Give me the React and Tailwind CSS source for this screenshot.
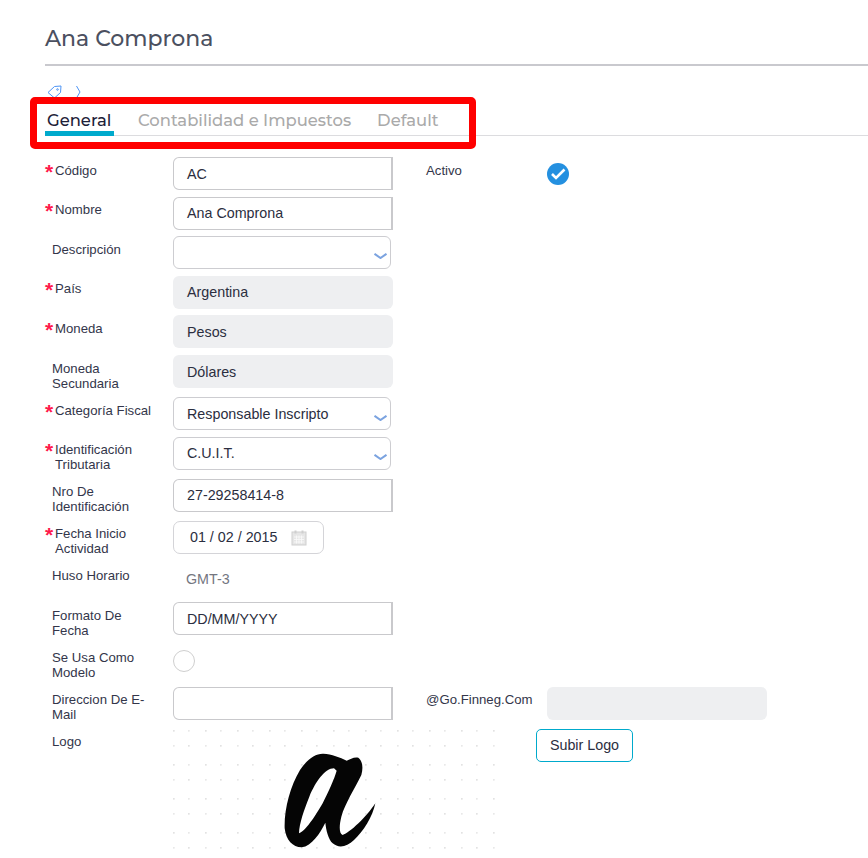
import React from "react";

const labelFont = "font-['Liberation_Sans',sans-serif]";
const inputBase = "h-[33px] flex items-center text-[14.3px] text-[#2b2e40]";
const textInput = `${inputBase} w-[220px] pl-[13px] bg-white border border-[#c9c9cc] border-r-2 rounded-l-[6px]`;
const readOnly = `${inputBase} w-[220px] pl-[14px] bg-[#eeeff1] rounded-[6px]`;

function Label({ required, tight, children }) {
    return (
        <div className={`w-[128px] shrink-0 flex ${tight ? "pt-[5px]" : "pt-[6px]"} text-[13.2px] leading-[15px] text-[#33364a]`}>
            {required ? (
                <span className="w-[10px] shrink-0 text-[#ff1a4b] text-[21px] leading-[17px] font-bold">*</span>
            ) : (
                <span className="w-[7px] shrink-0" />
            )}
            <span className="max-w-[100px]">{children}</span>
        </div>
    );
}

function Select({ value, className = "" }) {
    return (
        <div className={`${inputBase} w-[218px] pl-[13px] pr-[3px] justify-between bg-white border border-[#cdcdd1] rounded-[6px] ${className}`}>
            <span>{value}</span>
            <svg width="13" height="6" viewBox="0 0 13 6" fill="none" stroke="#7ba3e0" strokeWidth="2" className="mt-[6px]">
                <path d="M0.5 0.8 L6.5 5 L12.5 0.8" />
            </svg>
        </div>
    );
}

function TagIcon() {
    return (
        <svg width="15" height="14" viewBox="0 0 15 14" fill="none" stroke="#4f95f5" strokeWidth="1">
            <path d="M1 7.5 L7.5 1.5 L14 1 L13.5 7.5 L7.5 13 Z" />
            <circle cx="10.5" cy="4.5" r="0.8" />
        </svg>
    );
}

function CalendarIcon() {
    return (
        <svg width="16" height="16" viewBox="0 0 16 16">
            <rect x="1" y="2" width="14" height="13" fill="#e6e6e6" stroke="#cfcfcf" />
            <rect x="3.5" y="0.5" width="2" height="3" fill="#cfcfcf" />
            <rect x="10.5" y="0.5" width="2" height="3" fill="#cfcfcf" />
            <path d="M3 7h10M3 9.5h10M3 12h10M5.5 5.5v8M8 5.5v8M10.5 5.5v8" stroke="#fafafa" strokeWidth="0.8" />
        </svg>
    );
}

function LogoImage() {
    return (
        <svg width="322" height="122" viewBox="69 267 966 366">
            <defs>
                <pattern id="dots" x="69" y="267" width="96" height="102" patternUnits="userSpaceOnUse">
                    <rect x="0" y="3" width="5" height="5" fill="#e2e2e2" />
                    <rect x="45" y="3" width="5" height="5" fill="#e8e8e8" />
                    <rect x="0" y="48" width="5" height="5" fill="#e8e8e8" />
                    <rect x="45" y="48" width="5" height="5" fill="#e2e2e2" />
                </pattern>
            </defs>
            <rect x="69" y="267" width="966" height="366" fill="url(#dots)" />
            <path
                fillRule="evenodd"
                fill="#050505"
                d="M520 341 C545 342 570 352 590 362 C600 358 612 350 625 353 C638 362 640 385 634 405 C615 445 585 490 574 530 C568 555 566 580 578 585 C600 578 650 530 676 490 C668 530 640 575 612 600 C590 622 565 625 548 610 C535 598 528 570 526 548 C510 580 485 618 455 622 C428 622 408 600 404 565 C402 510 420 440 450 390 C470 360 495 340 520 341 Z M552 385 C525 385 497 425 478 470 C462 510 448 550 447 580 C465 575 495 530 518 490 C535 455 552 420 560 392 Z"
            />
        </svg>
    );
}

export default function App() {
    return (
        <div className={`relative w-[868px] h-[858px] overflow-hidden bg-white pl-[45px] ${labelFont}`}>
            {/* Header */}
            <h1 className="pt-[24px] h-[64px] text-[22px] leading-[30px] font-medium text-[#4b5060] font-['Montserrat','Inter',sans-serif]">
                Ana Comprona
            </h1>
            <div className="h-[2px] bg-[#c9c9ce]" />

            {/* Breadcrumb */}
            <div className="h-[29px] flex items-start gap-[14px] pl-[2px] pt-[19px]">
                <TagIcon />
                <svg width="5" height="14" viewBox="0 0 5 14" fill="none" stroke="#4f95f5" strokeWidth="1">
                    <path d="M0.5 1 L4 7 L0.5 13" />
                </svg>
            </div>

            {/* Tabs */}
            <div className="mt-[10px] h-[31px] flex border-b border-[#dcdcdf] text-[16.4px] leading-[24px] font-medium font-['Montserrat','Inter',sans-serif]">
                <div className="w-[69px] h-[31px] pl-[2px] pt-[3px] border-b-[5px] border-[#00aacc] text-[#1d2138] whitespace-nowrap">General</div>
                <div className="ml-[24px] pt-[3px] text-[#aaaaaa] whitespace-nowrap">Contabilidad e Impuestos</div>
                <div className="ml-[26px] pt-[3px] text-[#aaaaaa] whitespace-nowrap">Default</div>
            </div>

            {/* Form */}
            <div className="mt-[21px] flex flex-col">
                <div className="flex h-[33px]">
                    <Label required>Código</Label>
                    <div className={`${textInput} pt-[2px]`}>AC</div>
                    <div className="ml-[33px] w-[121px] pt-[6px] text-[13.2px] leading-[15px] text-[#33364a]">Activo</div>
                    <div className="mt-[6px] w-[22px] h-[22px] rounded-full bg-[#2490e0] flex items-center justify-center">
                        <svg width="16" height="14" viewBox="0 0 16 14" fill="none" stroke="#ffffff" strokeWidth="2.6">
                            <path d="M2 7 L6 11 L14.5 2.5" />
                        </svg>
                    </div>
                </div>
                <div className="flex h-[33px] mt-[7px]">
                    <Label required tight>Nombre</Label>
                    <div className={textInput}>Ana Comprona</div>
                </div>
                <div className="flex h-[33px] mt-[6px]">
                    <Label>Descripción</Label>
                    <Select value="" />
                </div>
                <div className="flex h-[33px] mt-[7px]">
                    <Label required tight>País</Label>
                    <div className={readOnly}>Argentina</div>
                </div>
                <div className="flex h-[33px] mt-[6px]">
                    <Label required>Moneda</Label>
                    <div className={`${readOnly} pt-[2px]`}>Pesos</div>
                </div>
                <div className="flex h-[33px] mt-[7px]">
                    <Label>Moneda Secundaria</Label>
                    <div className={`${readOnly} pt-[2px]`}>Dólares</div>
                </div>
                <div className="flex h-[33px] mt-[9px]">
                    <Label required>Categoría Fiscal</Label>
                    <Select value="Responsable Inscripto" className="pt-[2px]" />
                </div>
                <div className="flex h-[33px] mt-[7px]">
                    <Label required tight>Identificación Tributaria</Label>
                    <Select value="C.U.I.T." />
                </div>
                <div className="flex h-[33px] mt-[9px]">
                    <Label tight>Nro De Identificación</Label>
                    <div className={textInput}>27-29258414-8</div>
                </div>
                <div className="flex h-[33px] mt-[9px]">
                    <Label required tight>Fecha Inicio Actividad</Label>
                    <div className={`${inputBase} w-[151px] pl-[16px] bg-white border border-[#d4d4d8] rounded-[7px]`}>
                        <span className="whitespace-pre">01 / 02 / 2015</span>
                        <span className="ml-[14px]"><CalendarIcon /></span>
                    </div>
                </div>
                <div className="flex h-[33px] mt-[8px]">
                    <Label>Huso Horario</Label>
                    <div className="pl-[13px] pt-[9px] text-[14.3px] leading-[16px] text-[#74767f]">GMT-3</div>
                </div>
                <div className="flex h-[33px] mt-[7px]">
                    <Label>Formato De Fecha</Label>
                    <div className={`${textInput} pt-[2px]`}>DD/MM/YYYY</div>
                </div>
                <div className="flex h-[33px] mt-[9px]">
                    <Label>Se Usa Como Modelo</Label>
                    <div className="mt-[6px] w-[22px] h-[22px] rounded-full bg-white border border-[#cfcfcf]" />
                </div>
                <div className="flex h-[33px] mt-[10px]">
                    <Label tight>Direccion De E-Mail</Label>
                    <div className={textInput} />
                    <div className="ml-[33px] w-[121px] pt-[5px] text-[13.2px] leading-[15px] text-[#33364a]">@Go.Finneg.Com</div>
                    <div className="w-[220px] h-[33px] bg-[#eeeff1] rounded-[6px]" />
                </div>
                <div className="flex mt-[9px]">
                    <Label tight>Logo</Label>
                    <LogoImage />
                    <button className="ml-[41px] w-[97px] h-[33px] border border-[#00aacc] rounded-[5px] bg-white text-[14.3px] text-[#2b2e40]">
                        Subir Logo
                    </button>
                </div>
            </div>

            {/* Red annotation around the tabs */}
            <div className="absolute left-[30px] top-[97px] w-[446px] h-[52px] border-[7px] border-[#ff0000] rounded-[5px]" />
        </div>
    );
}
